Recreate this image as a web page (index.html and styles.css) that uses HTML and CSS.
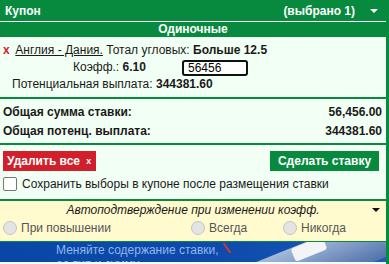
FILE: index.html
```html
<!DOCTYPE html>
<html lang="ru">
<head>
    <meta charset="UTF-8">
    <title>Купон</title>
    <link rel="stylesheet" href="styles.css">
</head>
<body>

<div class="coupon">
    <div class="coupon-head">
        <span>Купон</span>
        <span class="head-right">(выбрано 1) <span class="arrow"></span></span>
    </div>
    <div class="group-title">Одиночные</div>

    <div class="bet">
        <div class="bet-row">
            <span class="remove">x</span>
            <a class="match" href="#">Англия - Дания.</a> Тотал угловых: <b>Больше 12.5</b>
        </div>
        <div class="bet-row odds-row">
            <span class="odds">Коэфф.: <b>6.10</b></span>
            <input type="text" class="stake" value="56456">
        </div>
        <div class="bet-row payout-row">Потенциальная выплата: <b>344381.60</b></div>
    </div>

    <div class="totals">
        <div class="total-row"><span>Общая сумма ставки:</span><span>56,456.00</span></div>
        <div class="total-row"><span>Общая потенц. выплата:</span><span>344381.60</span></div>
    </div>

    <div class="actions">
        <div class="buttons">
            <button class="button delete-button">Удалить все <span class="small-x">x</span></button>
            <button class="button place-button">Сделать ставку</button>
        </div>
        <label class="keep">
            <span class="checkbox"></span>
            Сохранить выборы в купоне после размещения ставки
        </label>
    </div>

    <div class="auto">
        <div class="auto-title">Автоподтверждение при изменении коэфф. <span class="arrow dark"></span></div>
        <div class="auto-options">
            <label class="radio-label r1"><span class="radio"></span>При повышении</label>
            <label class="radio-label r2"><span class="radio"></span>Всегда</label>
            <label class="radio-label r3"><span class="radio"></span>Никогда</label>
        </div>
    </div>

    <div class="promo">
        <div class="promo-text">Меняйте содержание ставки,<br>ее тип и сумму</div>
        <div class="calc"></div>
        <div class="calc-key"></div>
        <div class="pen"></div>
    </div>
</div>

</body>
</html>
```

FILE: styles.css
```css
body {
    margin: 0;
    font-family: "Liberation Sans", Arial, sans-serif;
    font-size: 12px;
    color: #1a1a1a;
    background-color: #ffffff;
}
.coupon {
    width: 386px;
    border-right: 3px solid #078a3e;
    background-color: #f2fff4;
    height: 264px;
    overflow: hidden;
}
.coupon-head {
    display: flex;
    justify-content: space-between;
    align-items: center;
    height: 21px;
    padding: 0 8px 0 5px;
    background-color: #078a3e;
    color: #ffffff;
    font-weight: bold;
    border-bottom: 1px solid #ffffff;
}
.head-right {
    display: flex;
    align-items: center;
}
.arrow {
    width: 0;
    height: 0;
    margin-left: 15px;
    border-left: 4px solid transparent;
    border-right: 4px solid transparent;
    border-top: 4px solid #ffffff;
}
.group-title {
    height: 15px;
    line-height: 15px;
    background-color: #078a3e;
    color: #ffffff;
    font-weight: bold;
    text-align: center;
}
.bet {
    padding: 5px 0 4px 0;
    border-bottom: 2px solid #078a3e;
}
.bet-row {
    height: 17px;
    line-height: 17px;
    white-space: nowrap;
}
.remove {
    display: inline-block;
    color: #d11f2b;
    font-weight: bold;
    width: 12px;
    padding-left: 3px;
    box-sizing: border-box;
}
.match {
    color: #1a1a1a;
}
.odds-row {
    display: flex;
    align-items: center;
    padding-left: 73px;
}
.odds {
    width: 109px;
}
.stake {
    width: 66px;
    height: 16px;
    box-sizing: border-box;
    border: 2px solid #111111;
    border-radius: 3px;
    padding: 0 0 0 4px;
    font-family: "Liberation Sans", Arial, sans-serif;
    font-size: 12px;
    background: #ffffff;
}
.payout-row {
    padding-left: 12px;
}
.totals {
    padding: 4px 4px 2px 3px;
    border-bottom: 2px solid #078a3e;
}
.total-row {
    display: flex;
    justify-content: space-between;
    height: 19px;
    line-height: 19px;
    font-weight: bold;
}
.actions {
    padding: 6px 7px 0 3px;
    height: 56px;
    box-sizing: border-box;
    border-bottom: 2px solid #078a3e;
}
.buttons {
    display: flex;
    justify-content: space-between;
}
.button {
    height: 20px;
    border: none;
    color: #ffffff;
    font-family: "Liberation Sans", Arial, sans-serif;
    font-size: 12px;
    font-weight: bold;
    padding: 0;
}
.delete-button {
    background-color: #d11f2b;
    width: 93px;
    text-align: left;
    padding-left: 4px;
}
.small-x {
    font-size: 9px;
    margin-left: 3px;
    vertical-align: 1px;
}
.place-button {
    background-color: #078a3e;
    width: 109px;
}
.keep {
    display: flex;
    align-items: center;
    margin-top: 6px;
    gap: 5px;
}
.checkbox {
    width: 12px;
    height: 12px;
    border: 1px solid #767676;
    border-radius: 2px;
    background: #ffffff;
}
.auto {
    background-color: #fffbcf;
    height: 41px;
    border-bottom: 1px solid #078a3e;
    box-sizing: border-box;
}
.auto-title {
    position: relative;
    text-align: center;
    font-style: italic;
    height: 18px;
    line-height: 18px;
}
.dark {
    position: absolute;
    right: 6px;
    top: 7px;
    border-top-color: #111111;
}
.auto-options {
    display: flex;
    height: 18px;
    align-items: center;
}
.radio-label {
    display: flex;
    align-items: center;
    gap: 4px;
    color: #555555;
}
.r1 {
    width: 188px;
    padding-left: 3px;
}
.r2 {
    width: 92px;
}
.radio {
    width: 12px;
    height: 12px;
    border-radius: 50%;
    border: 1px solid #c4c4c4;
    background: #e4e4e4;
}
.promo {
    position: relative;
    height: 20px;
    background: linear-gradient(100deg, #0a46a6 0%, #0d4aa9 55%, #1a5bbd 100%);
    overflow: hidden;
}
.promo-text {
    position: relative;
    z-index: 1;
    padding-left: 56px;
    padding-top: 1px;
    color: #8fb6f0;
    line-height: 14px;
}
.calc {
    position: absolute;
    left: 240px;
    top: -4px;
    width: 160px;
    height: 44px;
    background: linear-gradient(180deg, #c9d4e4, #5f7aa6);
    transform: rotate(-22deg);
    border-radius: 6px;
    opacity: 0.8;
}
.calc-key {
    position: absolute;
    left: 292px;
    top: 0;
    width: 34px;
    height: 14px;
    background: #f2f4f8;
    transform: rotate(-22deg);
    border-radius: 3px;
}
.pen {
    position: absolute;
    left: 226px;
    top: 0;
    width: 2px;
    height: 12px;
    background: #c23a3a;
    transform: rotate(-35deg);
}
```
